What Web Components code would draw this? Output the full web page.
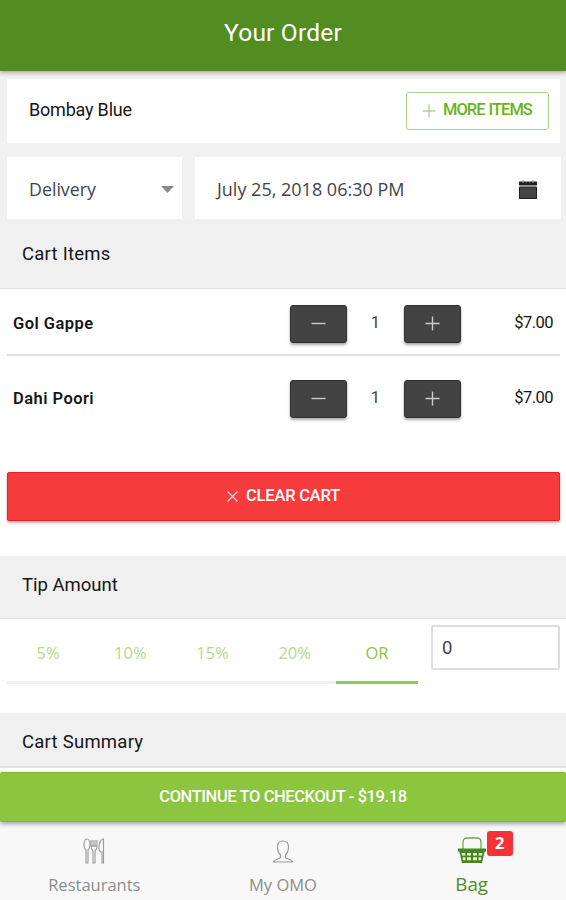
<!DOCTYPE html>
<html lang="en">
<head>
<meta charset="utf-8">
<title>Your Order</title>
<style>
    html, body { margin: 0; height: 100%; overflow: hidden; }
    body { font-family: "Open Sans", sans-serif; background: #fff; }
</style>
</head>
<body>
<order-page></order-page>
<script>
class BaseElement extends HTMLElement {
    constructor() {
        super();
        this.attachShadow({ mode: "open" });
    }

    connectedCallback() {
        const template = document.createElement("template");
        template.innerHTML = this.template();
        this.shadowRoot.innerHTML = "";
        this.shadowRoot.appendChild(template.content.cloneNode(true));
    }
}

class AppHeader extends BaseElement {
    template() {
        return `
            <style>
                :host {
                    display: flex;
                    justify-content: center;
                    height: 71px;
                    box-sizing: border-box;
                    padding-top: 17px;
                    background: #538d22;
                    color: #fff;
                    font: 400 24.5px/32px Roboto, sans-serif;
                    letter-spacing: .2px;
                    box-shadow: 0 1px 5px rgba(0, 0, 0, .4);
                    position: relative;
                    z-index: 1;
                }
            </style>
            <slot></slot>
        `;
    }
}

class RestaurantCard extends BaseElement {
    template() {
        return `
            <style>
                :host {
                    display: flex;
                    justify-content: space-between;
                    height: 64px;
                    margin: 8px 6px 14px 7px;
                    padding: 0 11px 0 22px;
                    background: #fff;
                    color: #161616;
                    font: 400 18px/61px Roboto, sans-serif;
                    letter-spacing: -.2px;
                }
                button {
                    display: flex;
                    align-items: center;
                    gap: 7px;
                    width: 143px;
                    height: 38px;
                    box-sizing: border-box;
                    margin: 13px 0 0;
                    padding: 0 0 3px 15px;
                    border: 1.5px solid #a9d28d;
                    border-radius: 3px;
                    background: none;
                    color: #6cb31b;
                    font: 500 16.5px Roboto, sans-serif;
                    letter-spacing: -1px;
                    word-spacing: 1px;
                    white-space: nowrap;
                }
                svg { flex: none; position: relative; top: 1px; }
            </style>
            <slot></slot>
            <button>
                <svg width="14" height="14" viewBox="0 0 14 14" stroke="#91bd72" stroke-width="1"><path d="M7 .5v13M.5 7h13"/></svg>
                <span>MORE ITEMS</span>
            </button>
        `;
    }
}

class DeliveryOptions extends BaseElement {
    template() {
        return `
            <style>
                :host {
                    display: grid;
                    grid-template-columns: 175px 1fr;
                    gap: 13px;
                    height: 62px;
                    margin: 0 5px 0 7px;
                    color: #444;
                    font-size: 17.8px;
                    line-height: 63px;
                }
                div {
                    display: flex;
                    align-items: center;
                    justify-content: space-between;
                    background: #fff;
                    padding: 0 8px 0 22px;
                }
                .date { padding-right: 23px; font-size: 18px; line-height: 65px; }
            </style>
            <div>
                <span class="type">Delivery</span>
                <svg width="13" height="7" viewBox="0 0 13 7"><path d="M0 0h13L6.5 7z" fill="#888"/></svg>
            </div>
            <div class="date">
                <span class="when">July 25, 2018 06:30 PM</span>
                <svg width="20" height="20" viewBox="0 0 20 20">
                    <path d="M1 1.5h18v4H1z" fill="#222"/>
                    <path d="M5 0v3M15 0v3M8.500 1v1.500M11.500 1v1.500" stroke="#999"/>
                    <path d="M1.500 7h17v11.500h-17z" fill="#444" stroke="#1c1c1c"/>
                </svg>
            </div>
        `;
    }
}

class SectionTitle extends BaseElement {
    template() {
        return `
            <style>
                :host {
                    display: block;
                    box-sizing: border-box;
                    height: 63px;
                    padding: 0 22px;
                    background: #f0f0f0;
                    border-bottom: 1px solid #e2e2e2;
                    color: #161616;
                    font: 400 18.5px/58px Roboto, sans-serif;
                    letter-spacing: .25px;
                }
            </style>
            <slot></slot>
        `;
    }
}

class CartItem extends BaseElement {
    template() {
        return `
            <style>
                :host {
                    display: grid;
                    grid-template-columns: 1fr 57px 57px 57px 99px;
                    margin: 0 6px 0 7px;
                    padding: 16px 0 10px;
                    color: #161616;
                    font: 400 16.5px/37px Roboto, sans-serif;
                }
                .name { padding-left: 6px; font-weight: 600; letter-spacing: .45px; }
                button {
                    display: flex;
                    align-items: center;
                    justify-content: center;
                    height: 38px;
                    padding: 0 0 1px;
                    border: 1px solid #303030;
                    border-radius: 3px;
                    background: #434343;
                    box-shadow: 0 2px 3px rgba(0, 0, 0, .35);
                }
                .qty { text-align: center; line-height: 35px; color: #444; }
                .price { text-align: right; padding-right: 7px; line-height: 36px; letter-spacing: -.55px; }
                svg { stroke: #ccc; stroke-width: 1.4; }
            </style>
            <span class="name"><slot></slot></span>
            <button><svg width="15" height="15" viewBox="0 0 15 15"><path d="M.5 7.5h14"/></svg></button>
            <span class="qty">1</span>
            <button><svg width="15" height="15" viewBox="0 0 15 15"><path d="M.5 7.5h14M7.5 .5v14"/></svg></button>
            <span class="price">$7.00</span>
        `;
    }
}

class ClearCart extends BaseElement {
    template() {
        return `
            <style>
                :host {
                    display: flex;
                    align-items: center;
                    justify-content: center;
                    gap: 8px;
                    box-sizing: border-box;
                    height: 49px;
                    margin: 0 6px 35px 7px;
                    padding-bottom: 1px;
                    border: 1px solid #ec2024;
                    border-radius: 2px;
                    background: #f63b3c;
                    box-shadow: 0 2px 3px rgba(0, 0, 0, .3);
                    color: #fff;
                    font: 500 16.5px/20px Roboto, sans-serif;
                    letter-spacing: -.2px;
                }
            </style>
            <svg width="11" height="11" viewBox="0 0 11 11" stroke="#ffd5d5" stroke-width="1.2"><path d="M.5 .5l10 10M10.5 .5l-10 10"/></svg>
            <span><slot></slot></span>
        `;
    }
}

class TipPicker extends BaseElement {
    template() {
        return `
            <style>
                :host {
                    display: grid;
                    grid-template-columns: 411px 129px;
                    gap: 13px;
                    height: 94px;
                    margin-left: 7px;
                }
                .tabs { display: grid; grid-template-columns: repeat(5, 1fr); height: 65px; }
                .tabs span {
                    text-align: center;
                    color: #b4da87;
                    font-size: 16.5px;
                    line-height: 67px;
                    height: 62px;
                    border-bottom: 3px solid #f0f0f0;
                }
                .tabs .active { color: #8dc63f; border-color: #92c951; }
                .amount {
                    box-sizing: border-box;
                    height: 45px;
                    margin-top: 6px;
                    padding-left: 9px;
                    border: 2px solid #dedede;
                    border-radius: 2px;
                    color: #444;
                    font: 400 18.5px/43px Roboto, sans-serif;
                }
            </style>
            <div class="tabs">
                <span>5%</span><span>10%</span><span>15%</span><span>20%</span><span class="active">OR</span>
            </div>
            <div class="amount">0</div>
        `;
    }
}

class CheckoutButton extends BaseElement {
    template() {
        return `
            <style>
                :host {
                    display: block;
                    height: 50px;
                    box-sizing: border-box;
                    border-top: 1px solid #7eba22;
                    border-bottom: 1px solid #7fb737;
                    border-radius: 2px;
                    background: #8cc63f;
                    box-shadow: 0 2px 4px rgba(0, 0, 0, .35);
                    color: #fff;
                    text-align: center;
                    font: 500 16.5px/48px Roboto, sans-serif;
                    letter-spacing: -.4px;
                    position: relative;
                    z-index: 1;
                }
            </style>
            <slot></slot>
        `;
    }
}

class NavTab extends BaseElement {
    template() {
        return `
            <style>
                :host {
                    display: flex;
                    flex-direction: column;
                    align-items: center;
                    color: #8e8e8e;
                    font-size: 16.5px;
                    line-height: 26px;
                }
                .icon { position: relative; height: 28px; margin: 15px 0 7px; }
                ::slotted(svg) { display: block; }
            </style>
            <div class="icon"><slot name="icon"></slot><slot name="badge"></slot></div>
            <slot></slot>
        `;
    }
}

class NavBadge extends BaseElement {
    template() {
        return `
            <style>
                :host {
                    position: absolute;
                    left: 29px;
                    top: -6px;
                    width: 26px;
                    height: 25px;
                    border-radius: 3px;
                    background: #f53236;
                    color: #fff;
                    text-align: center;
                    font: 700 16.5px/24px "Open Sans", sans-serif;
                }
            </style>
            <slot></slot>
        `;
    }
}

class OrderPage extends BaseElement {
    template() {
        return `
            <style>
                :host { display: flex; flex-direction: column; height: 100vh; }
                .top { background: #f1f1f1; display: flow-root; }
                .items { height: 183px; }
                .items hr { height: 2px; margin: 0 6px 0 7px; border: 0; background: #e2e2e2; }
                #first { height: 39px; }
                #second { padding-top: 24px; }
                .cart-title { height: 70px; line-height: 71px; }
                .tip-title { letter-spacing: 0; }
                .summary { height: 55px; line-height: 59px; border-bottom-width: 2px; margin-bottom: 4px; }
                nav {
                    flex: 1;
                    display: grid;
                    grid-template-columns: repeat(3, 1fr);
                    background: #f8f8f8;
                }
                .bag { color: #538d22; font-size: 18.8px; line-height: 25px; }
            </style>
            <app-header>Your Order</app-header>
            <div class="top">
                <restaurant-card>Bombay Blue</restaurant-card>
                <delivery-options></delivery-options>
            </div>
            <section-title class="cart-title">Cart Items</section-title>
            <div class="items">
                <cart-item id="first">Gol Gappe</cart-item>
                <hr>
                <cart-item id="second">Dahi Poori</cart-item>
            </div>
            <clear-cart>CLEAR CART</clear-cart>
            <section-title class="tip-title">Tip Amount</section-title>
            <tip-picker></tip-picker>
            <section-title class="summary">Cart Summary</section-title>
            <checkout-button>CONTINUE TO CHECKOUT - $19.18</checkout-button>
            <nav>
                <nav-tab>
                    <svg slot="icon" width="22" height="28" viewBox="0 0 22 28" fill="none" stroke="#999" stroke-width="1.1">
                        <path d="M4 2C2 2 1 5 1 8s1 4 2 5v13h2V13c1-1 2-2 2-5S6 2 4 2z"/>
                        <path d="M8 3v7c0 2 1 3 2 4v12h2V14c1-1 2-2 2-4V3M10 3v7M12 3v7M8 9h6"/>
                        <path d="M20 2c-3 1-4 5-4 9 0 2 1 4 3 4v11h1.5V2z"/>
                    </svg>
                    Restaurants
                </nav-tab>
                <nav-tab>
                    <svg slot="icon" width="22" height="28" viewBox="0 0 22 28" fill="none" stroke="#999" stroke-width="1.2">
                        <path d="M8.500 18c-2-2-3-5-3-8 0-4 2-6 5.500-6s5.500 2 5.500 6c0 3-1 6-3 8v2.500c0 1.500 6 1 7 4.500H1.500c1-3.500 7-3 7-4.500z"/>
                    </svg>
                    My OMO
                </nav-tab>
                <nav-tab class="bag">
                    <svg slot="icon" width="28" height="28" viewBox="0 0 28 28" fill="none">
                        <path d="M5 12V5c0-3 2-4 4-4h10c2 0 4 1 4 4v7" stroke="#77a553" stroke-width="1.3"/>
                        <path d="M0 11.5h28v3h-1.3L24 26H4L1.300 14.500H0z" fill="#458621"/>
                        <path d="M3.500 16h3.800v2.600H4.100zM9 16h4v2.600H9zM15 16h4v2.600h-4zM20.700 16h3.800l-.6 2.600h-3.200zM4.500 20.300h3v3H5.200zM9 20.300h4v3H9zM15 20.300h4v3h-4zM20.500 20.300h3l-.7 3h-2.300z" fill="#e4efd9"/>
                    </svg>
                    <nav-badge slot="badge">2</nav-badge>
                    Bag
                </nav-tab>
            </nav>
        `;
    }
}

customElements.define("app-header", AppHeader);
customElements.define("restaurant-card", RestaurantCard);
customElements.define("delivery-options", DeliveryOptions);
customElements.define("section-title", SectionTitle);
customElements.define("cart-item", CartItem);
customElements.define("clear-cart", ClearCart);
customElements.define("tip-picker", TipPicker);
customElements.define("checkout-button", CheckoutButton);
customElements.define("nav-tab", NavTab);
customElements.define("nav-badge", NavBadge);
customElements.define("order-page", OrderPage);
</script>
</body>
</html>
